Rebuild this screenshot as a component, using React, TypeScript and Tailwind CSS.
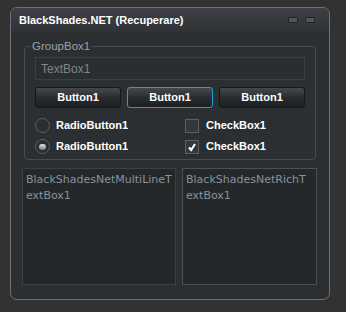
import React from "react";

const font = { fontFamily: '"Liberation Sans", Arial, sans-serif' };
const mono = { fontFamily: '"DejaVu Sans", sans-serif' };

function Btn({ active }: { active?: boolean }) {
  return (
    <div
      className={
        "flex h-[21px] flex-1 items-center justify-center rounded-[3px] border bg-gradient-to-b from-[#45494d] via-[#2a2d30] to-[#1c1f22] text-[11px] font-bold text-white " +
        (active ? "border-[#1e9ee0]" : "border-[#15181a]")
      }
    >
      Button1
    </div>
  );
}

export default function App() {
  return (
    <div className="h-[312px] w-[346px] bg-[#333232] pt-[7px] pl-[10px]" style={font}>
      <div className="flex h-[293px] w-[320px] flex-col rounded-[7px] border border-[#6c7378] bg-[#2b2f32]">
        <div className="flex h-[24px] items-center justify-between rounded-t-[6px] bg-gradient-to-b from-[#3d4145] to-[#2f3336] pl-[8px] pr-[14px]">
          <span className="pt-[1px] text-[11px] font-bold text-white">BlackShades.NET (Recuperare)</span>
          <div className="flex gap-[7px]">
            <div className="h-[6px] w-[10px] rounded-[1px] border border-[#1f2326] bg-[#50565b]" />
            <div className="h-[6px] w-[10px] rounded-[1px] border border-[#1f2326] bg-[#50565b]" />
          </div>
        </div>
        <div className="relative mx-[13px] mt-[14px] h-[114px] rounded-[4px] border border-[#474c50] px-[10px] pt-[10px]">
          <span className="absolute left-[6px] top-[-8px] bg-[#2b2f32] px-[1px] text-[11.5px] leading-[14px] text-[#9aa2a8]">GroupBox1</span>
          <div className="flex h-[23px] items-center border border-[#3a3f43] bg-[#2a2e31] pl-[5px] text-[12px] text-[#7e868c]">TextBox1</div>
          <div className="mt-[7px] flex gap-[6px]">
            <Btn />
            <Btn active />
            <Btn />
          </div>
          <div className="mt-[10px] grid grid-cols-[150px_1fr] gap-y-[6px] text-[11px] font-bold text-white">
            <div className="flex h-[15px] items-center gap-[6px]">
              <div className="h-[15px] w-[15px] rounded-full border border-[#595f64] bg-[#2a2e31]" />
              <span>RadioButton1</span>
            </div>
            <div className="flex h-[15px] items-center gap-[7px]">
              <div className="h-[14px] w-[14px] border border-[#5a6065] bg-[#34383b]" />
              <span>CheckBox1</span>
            </div>
            <div className="flex h-[15px] items-center gap-[6px]">
              <div className="flex h-[15px] w-[15px] items-center justify-center rounded-full border border-[#595f64] bg-[#2a2e31]">
                <div className="h-[6px] w-[7px] rounded-full bg-gradient-to-b from-[#e8e8e8] to-[#7a7a7a]" />
              </div>
              <span>RadioButton1</span>
            </div>
            <div className="flex h-[15px] items-center gap-[7px]">
              <div className="flex h-[14px] w-[14px] items-center justify-center border border-[#5a6065] bg-[#34383b]">
                <svg width="10" height="10" viewBox="0 0 10 10">
                  <path d="M2 5.5 L4.2 8 L8 2" stroke="white" strokeWidth="2.2" fill="none" />
                </svg>
              </div>
              <span>CheckBox1</span>
            </div>
          </div>
        </div>
        <div className="mx-[11px] mt-[8px] flex gap-[6px]" style={mono}>
          <div className="h-[117px] w-[154px] border border-[#3b4044] bg-[#24282b] px-[3px] pt-[3px] text-[11px] leading-[16px] text-[#8a9298]">
            BlackShadesNetMultiLineT
            <br />
            extBox1
          </div>
          <div className="h-[117px] w-[135px] border border-[#4a5054] bg-[#24282b] px-[3px] pt-[3px] text-[11px] leading-[16px] text-[#8a9298]">
            BlackShadesNetRichT
            <br />
            extBox1
          </div>
        </div>
      </div>
    </div>
  );
}
